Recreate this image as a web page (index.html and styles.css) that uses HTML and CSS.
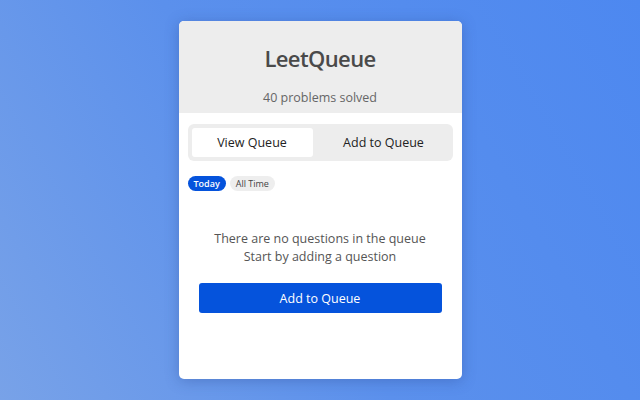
FILE: index.html
```html
<!DOCTYPE html>
<html>
<head>
<meta charset="utf-8">
<link rel="stylesheet" href="styles.css">
</head>
<body>
<div class="card">
  <header class="head">
    <h1 class="title">LeetQueue</h1>
    <p class="solved">40 problems solved</p>
  </header>
  <div class="body">
    <div class="tabs">
      <div class="tab active">View Queue</div>
      <div class="tab">Add to Queue</div>
    </div>
    <div class="pills">
      <span class="pill on">Today</span>
      <span class="pill">All Time</span>
    </div>
    <div class="empty">
      <p>There are no questions in the queue</p>
      <p>Start by adding a question</p>
    </div>
    <div class="cta">Add to Queue</div>
  </div>
</div>
</body>
</html>
```
FILE: styles.css
```css
html, body { margin: 0; height: 100%; }
body {
  width: 640px; height: 400px;
  background: linear-gradient(60deg, #78a2e8 0%, #5b90ec 45%, #4d88f0 100%);
  font-family: "Open Sans", "Noto Sans", sans-serif;
  display: flex; justify-content: center; align-items: flex-start;
  overflow: hidden;
}
.card {
  margin-top: 21px;
  width: 283px; height: 358px;
  background: #fff;
  border-radius: 5px;
  overflow: hidden;
  box-shadow: 0 2px 14px rgba(40, 70, 140, 0.35);
  display: flex; flex-direction: column;
}
.head {
  background: #ededed;
  height: 92px;
  display: flex; flex-direction: column; align-items: center;
}
.title {
  margin: 22px 0 0;
  font-size: 22px; font-weight: 600; color: #4a4a4a;
  line-height: 30px; letter-spacing: -0.6px;
}
.solved {
  margin: 17px 0 0;
  font-size: 12.5px; color: #666; line-height: 16px;
}
.body { padding: 11px 9px 0; display: flex; flex-direction: column; }
.tabs {
  background: #ededed; border-radius: 6px;
  height: 37px; padding: 4px; box-sizing: border-box;
  display: flex;
}
.tab {
  flex: 1; display: flex; align-items: center; justify-content: center;
  font-size: 12.5px; color: #222; border-radius: 3px;
}
.tab + .tab { padding-left: 6px; }
.tab.active { background: #fff; flex: 0 0 121px; }
.pills { display: flex; gap: 4px; margin-top: 15px; }
.pill {
  font-size: 9px; line-height: 15px; padding: 0 6px;
  border-radius: 8px; background: #eee; color: #444;
}
.pill.on { background: #0553dc; color: #fff; font-weight: 600; }
.empty {
  margin-top: 39px; text-align: center;
  font-size: 12.5px; color: #555; line-height: 18px;
}
.empty p { margin: 0; }
.cta {
  margin: 17px 11px 0;
  height: 30px; background: #0553dc; border-radius: 3px;
  color: #fff; font-size: 12.5px;
  display: flex; align-items: center; justify-content: center;
}
```
